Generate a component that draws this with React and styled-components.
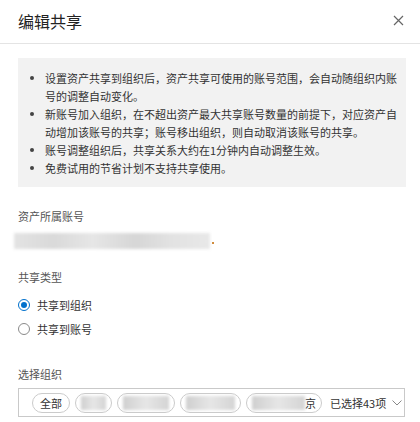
import styled, { createGlobalStyle } from 'styled-components';

const GlobalStyle = createGlobalStyle`
  html, body {
    margin: 0;
    padding: 0;
    background: #fff;
  }
  body {
    font-family: "Noto Sans CJK SC", "Liberation Sans", sans-serif;
    color: #333;
  }
`

const Dialog = styled.div`
  width: 420px;
  height: 422px;
  overflow: hidden;
  background: #fff;
`

const Header = styled.div`
  height: 44px;
  box-sizing: border-box;
  padding: 0 16px 2px 18px;
  display: flex;
  align-items: center;
  justify-content: space-between;
  border-bottom: 1px solid #e4e4e4;
`

const Title = styled.h2`
  margin: 0;
  font-size: 16px;
  font-weight: 400;
  color: #222;
  line-height: 20px;
`

const CloseBtn = styled.button`
  border: none;
  background: none;
  padding: 0;
  width: 12px;
  height: 12px;
  display: flex;
  align-items: center;
  justify-content: center;
  cursor: pointer;
`

const Body = styled.div`
  padding: 14px 14px 0 18px;
  display: flex;
  flex-direction: column;
`

const Notice = styled.ul`
  margin: 0;
  list-style: none;
  background: #f2f2f2;
  padding: 11px 6px 10px 12px;
  width: 388px;
  box-sizing: border-box;
`

const NoticeItem = styled.li`
  display: flex;
  font-size: 11px;
  line-height: 18px;
  color: #333;

  &::before {
    content: "";
    flex-shrink: 0;
    width: 4px;
    height: 4px;
    border-radius: 50%;
    background: #444;
    margin: 7px 11px 0 0;
  }
`

const Label = styled.div`
  font-size: 11px;
  line-height: 18px;
  color: #555;
  margin-top: ${p => p.$top}px;
`

const AccountRow = styled.div`
  margin-top: 7px;
  height: 17px;
  display: flex;
  align-items: center;
  margin-left: -4px;
`

const Blur = styled.div`
  width: ${p => p.$w}px;
  height: ${p => p.$h}px;
  background: linear-gradient(90deg, #e3e3e3 0%, #d9d9d9 20%, #e6e6e6 40%, #d6d6d6 62%, #e2e2e2 80%, #e8e8e8 100%);
  filter: blur(1.5px);
  flex-shrink: 0;
`

const Dot = styled.span`
  width: 2px;
  height: 2px;
  background: #d08a3a;
  margin: 4px 0 0 2px;
`

const RadioGroup = styled.div`
  margin-top: 10px;
  display: flex;
  flex-direction: column;
  gap: 6px;
`

const RadioRow = styled.label`
  display: flex;
  align-items: center;
  height: 18px;
  font-size: 11px;
  color: #333;
  gap: 7px;
`

const RadioCircle = styled.span`
  width: 12px;
  height: 12px;
  box-sizing: border-box;
  border-radius: 50%;
  border: 1px solid ${p => (p.$checked ? '#0070cc' : '#8a8a8a')};
  display: flex;
  align-items: center;
  justify-content: center;

  &::after {
    content: "";
    width: 6px;
    height: 6px;
    border-radius: 50%;
    background: ${p => (p.$checked ? '#0070cc' : 'transparent')};
  }
`

const Select = styled.div`
  margin-top: 5px;
  width: 387px;
  height: 29px;
  box-sizing: border-box;
  border: 1px solid #c9c9c9;
  display: flex;
  align-items: center;
  padding: 0 1px 0 13px;
`

const Tags = styled.div`
  display: flex;
  align-items: center;
  gap: 5px;
  flex: 0 1 auto;
  min-width: 0;
  overflow: hidden;
`

const Tag = styled.span`
  height: 20px;
  width: ${p => p.$w}px;
  box-sizing: border-box;
  border: 1px solid #cbcbcb;
  border-radius: 10px;
  display: flex;
  align-items: center;
  justify-content: ${p => (p.$end ? 'flex-end' : 'center')};
  padding: 0 5px 0 5px;
  font-size: 11px;
  color: #333;
  flex-shrink: 0;
  overflow: hidden;
`

const TagBlur = styled.span`
  flex: 1;
  height: 14px;
  background: linear-gradient(90deg, #cfcfcf, #e6e6e6 50%, #d4d4d4);
  filter: blur(1.5px);
`

const Count = styled.span`
  font-size: 11px;
  color: #333;
  margin-left: 8px;
  white-space: nowrap;
`

const Chevron = styled.svg`
  margin-left: 6px;
  flex-shrink: 0;
`

const notes = [
  '设置资产共享到组织后，资产共享可使用的账号范围，会自动随组织内账号的调整自动变化。',
  '新账号加入组织，在不超出资产最大共享账号数量的前提下，对应资产自动增加该账号的共享；账号移出组织，则自动取消该账号的共享。',
  '账号调整组织后，共享关系大约在1分钟内自动调整生效。',
  '免费试用的节省计划不支持共享使用。',
]

const App = () => {
  return (
    <Dialog>
      <GlobalStyle />
      <Header>
        <Title>编辑共享</Title>
        <CloseBtn aria-label='close'>
          <svg width='11' height='11' viewBox='0 0 11 11'>
            <path d='M1 1 L10 10 M10 1 L1 10' stroke='#666' strokeWidth='1.2' fill='none' />
          </svg>
        </CloseBtn>
      </Header>
      <Body>
        <Notice>
          {notes.map((n, i) => (
            <NoticeItem key={i}>{n}</NoticeItem>
          ))}
        </Notice>

        <Label $top={20}>资产所属账号</Label>
        <AccountRow>
          <Blur $w={196} $h={16} />
          <Dot />
        </AccountRow>

        <Label $top={19}>共享类型</Label>
        <RadioGroup>
          <RadioRow>
            <RadioCircle $checked />
            共享到组织
          </RadioRow>
          <RadioRow>
            <RadioCircle />
            共享到账号
          </RadioRow>
        </RadioGroup>

        <Label $top={27}>选择组织</Label>
        <Select>
          <Tags>
            <Tag $w={38}>全部</Tag>
            <Tag $w={37}><TagBlur /></Tag>
            <Tag $w={58}><TagBlur /></Tag>
            <Tag $w={61}><TagBlur /></Tag>
            <Tag $w={76} $end><TagBlur />京</Tag>
          </Tags>
          <Count>已选择43项</Count>
          <Chevron width='10' height='6' viewBox='0 0 10 6'>
            <path d='M0.5 0.5 L5 5 L9.5 0.5' stroke='#888' strokeWidth='1' fill='none' />
          </Chevron>
        </Select>
      </Body>
    </Dialog>
  )
}

export default App;
